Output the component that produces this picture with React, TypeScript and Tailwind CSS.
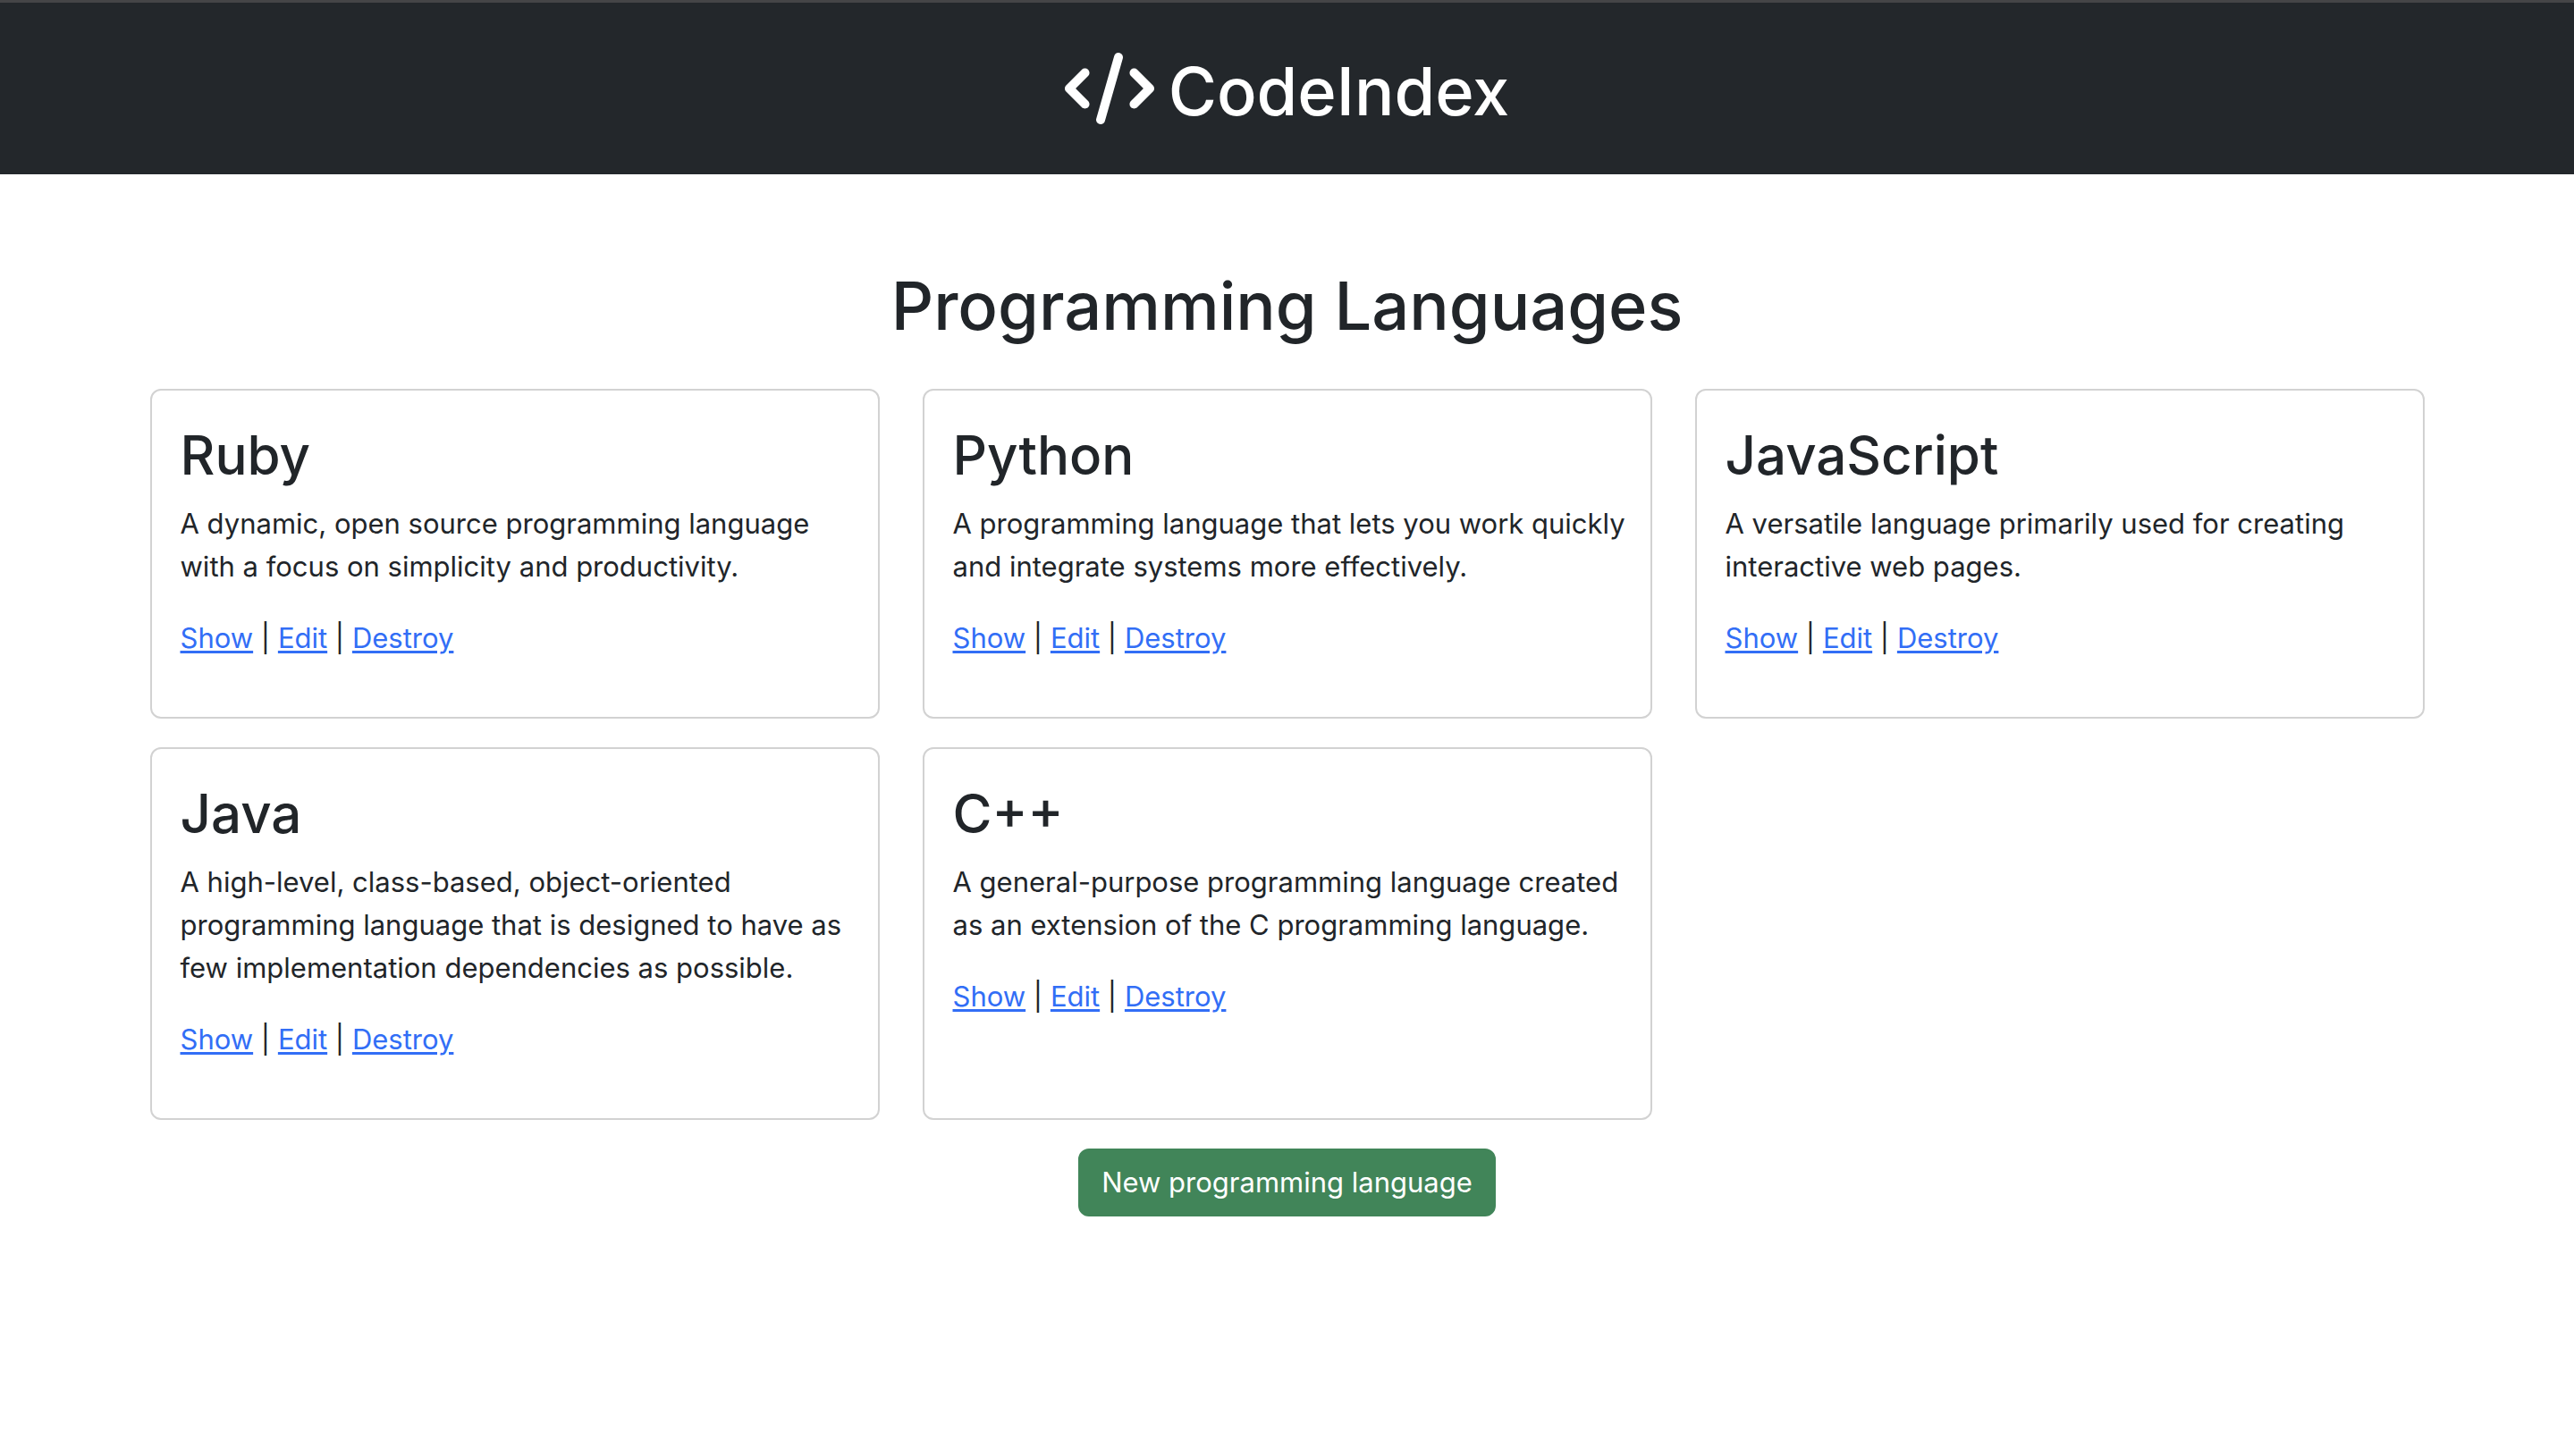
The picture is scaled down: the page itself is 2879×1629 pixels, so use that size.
import { FaCode } from "react-icons/fa6";

type Language = { name: string; description: string };

const languages: Language[] = [
  {
    name: "Ruby",
    description:
      "A dynamic, open source programming language with a focus on simplicity and productivity.",
  },
  {
    name: "Python",
    description:
      "A programming language that lets you work quickly and integrate systems more effectively.",
  },
  {
    name: "JavaScript",
    description:
      "A versatile language primarily used for creating interactive web pages.",
  },
  {
    name: "Java",
    description:
      "A high-level, class-based, object-oriented programming language that is designed to have as few implementation dependencies as possible.",
  },
  {
    name: "C++",
    description:
      "A general-purpose programming language created as an extension of the C programming language.",
  },
];

function ActionLink({ label }: { label: string }) {
  return (
    <a
      href="#"
      className="text-[#326ef6] underline decoration-3 underline-offset-3 hover:text-[#0a58ca]"
    >
      {label}
    </a>
  );
}

function LanguageCard({ name, description }: Language) {
  return (
    <article className="rounded-xl border-2 border-[#d2d2d2] bg-white py-8 pr-6 pl-8">
      <h2 className="mb-3 text-[60px] leading-[81px] font-medium">{name}</h2>
      <p className="mb-8">{description}</p>
      <p className="mb-8">
        <ActionLink label="Show" /> | <ActionLink label="Edit" /> |{" "}
        <ActionLink label="Destroy" />
      </p>
    </article>
  );
}

export default function App() {
  return (
    <div className="min-h-screen bg-white font-['Inter',sans-serif] text-[31px] leading-[48px] text-[#212529]">
      <header className="border-t-3 border-[#454547] bg-[#23272b] pt-12 pb-[42px] text-white">
        <div className="flex items-start justify-center gap-4 text-[74px] leading-[102px] font-medium">
          <FaCode className="mt-2 h-20 w-[100px]" aria-hidden="true" />
          <span>CodeIndex</span>
        </div>
      </header>
      <main className="mx-auto flex max-w-[2640px] flex-col items-center px-12 pt-24 pb-12">
        <h1 className="mb-[42px] text-center text-[74px] leading-[102px] font-medium">
          Programming Languages
        </h1>
        <div className="mb-8 grid w-full grid-cols-1 gap-x-12 gap-y-8 md:grid-cols-2 xl:grid-cols-3">
          {languages.map((language) => (
            <LanguageCard key={language.name} {...language} />
          ))}
        </div>
        <button
          type="button"
          className="rounded-xl border-2 border-[#418559] bg-[#418559] px-6 py-3 text-white hover:bg-[#38734d]"
        >
          New programming language
        </button>
      </main>
    </div>
  );
}
